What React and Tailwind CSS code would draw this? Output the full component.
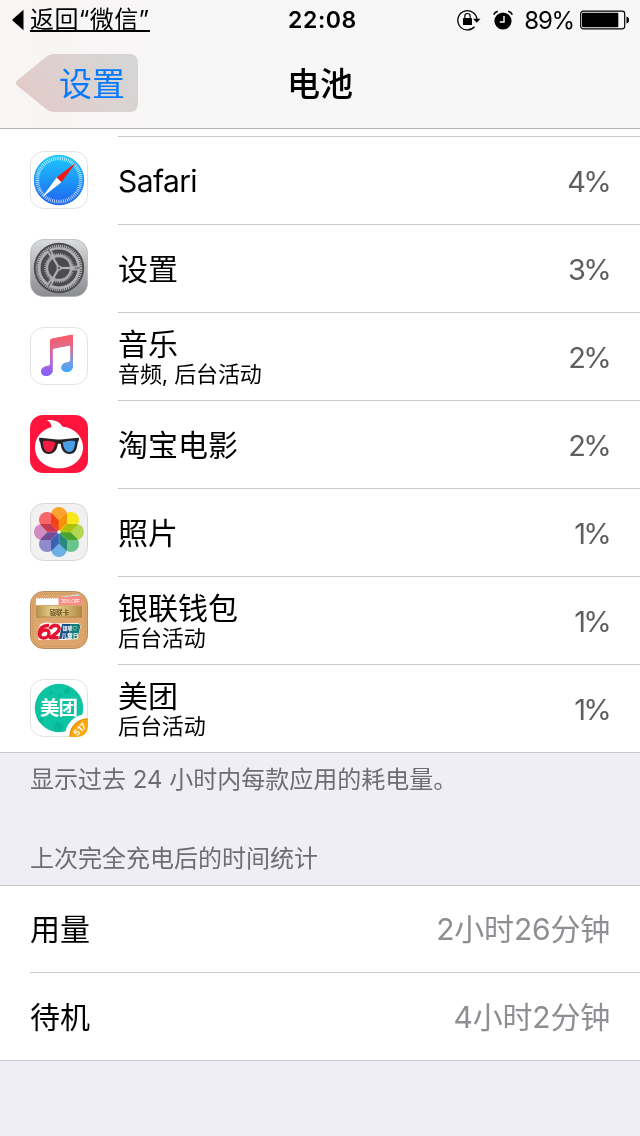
import React from 'react';

// =========================================================================
// 1. APP ICONS
// =========================================================================

const ANGLES_8 = [0, 45, 90, 135, 180, 225, 270, 315];

const SafariIcon = () => (
  <svg viewBox="0 0 58 58" className="block size-[58px]">
    <defs>
      <linearGradient id="safari" x1="0" y1="0" x2="0" y2="1">
        <stop offset="0" stopColor="#1bcbfc" />
        <stop offset="1" stopColor="#1f62ef" />
      </linearGradient>
    </defs>
    <rect x=".5" y=".5" width="57" height="57" rx="13" fill="#fff" stroke="#e2e2e4" />
    <circle cx="29" cy="29" r="25.2" fill="url(#safari)" />
    <circle cx="29" cy="29" r="21.6" fill="none" stroke="#fff" strokeOpacity=".8" strokeWidth="3.6" strokeDasharray=".8 1.1" />
    <path d="M46 11.5 31.4 31.2 26.6 26.6Z" fill="#fb1414" />
    <path d="M12 46.5 26.6 26.6 31.4 31.2Z" fill="#fff" />
  </svg>
);

const SettingsIcon = () => (
  <svg viewBox="0 0 58 58" className="block size-[58px]">
    <defs>
      <linearGradient id="settings" x1="0" y1="0" x2="0" y2="1">
        <stop offset="0" stopColor="#dadbdc" />
        <stop offset="1" stopColor="#8b8c91" />
      </linearGradient>
    </defs>
    <rect x=".5" y=".5" width="57" height="57" rx="13" fill="url(#settings)" stroke="#a9aaad" strokeOpacity=".6" />
    <circle cx="29" cy="29" r="25.2" fill="#4b4b4d" />
    <circle cx="29" cy="29" r="22" fill="none" stroke="#b4b5b8" strokeWidth="2.6" strokeDasharray="1.1 .9" />
    <circle cx="29" cy="29" r="19.8" fill="none" stroke="#b0b1b4" strokeWidth="2.6" />
    <circle cx="29" cy="29" r="14" fill="none" stroke="#a4a5a8" strokeWidth="1.8" strokeDasharray="1 .9" />
    <circle cx="29" cy="29" r="12.1" fill="none" stroke="#a8a9ac" strokeWidth="2.6" />
    {[0, 120, 240].map((angle) => (
      <g key={angle} transform={`rotate(${angle} 29 29)`}>
        <path d="M41 26.6H48V31.4H41Z" fill="#a8a9ac" />
        <path d="M29 29H48" stroke="#b0b1b4" strokeWidth="2.2" />
        <path d="M44.5 29H50" stroke="#4b4b4d" strokeWidth=".9" />
      </g>
    ))}
    <circle cx="29" cy="29" r="2.6" fill="#a8a9ac" />
    <circle cx="29" cy="29" r="1.1" fill="#4b4b4d" />
  </svg>
);

const MusicIcon = () => (
  <svg viewBox="0 0 58 58" className="block size-[58px]">
    <defs>
      <linearGradient id="noteLeft" gradientUnits="userSpaceOnUse" x1="0" y1="8" x2="0" y2="49">
        <stop offset="0" stopColor="#ff5a66" />
        <stop offset=".3" stopColor="#f0607d" />
        <stop offset=".65" stopColor="#b765d4" />
        <stop offset="1" stopColor="#8061ff" />
      </linearGradient>
      <linearGradient id="noteRight" gradientUnits="userSpaceOnUse" x1="0" y1="8" x2="0" y2="45">
        <stop offset="0" stopColor="#ff5a66" />
        <stop offset=".35" stopColor="#dd6c90" />
        <stop offset=".75" stopColor="#739bdd" />
        <stop offset="1" stopColor="#39a9ff" />
      </linearGradient>
    </defs>
    <rect x=".5" y=".5" width="57" height="57" rx="13" fill="#fff" stroke="#e2e2e4" />
    <path d="M20 13.2Q20 12 21.5 11.7L43 7.8V17.8L22.8 21.8V43C22.8 47 19.5 49 16 49 12.7 49 11 47 11 44.4 11 41.5 13.5 39.7 16.8 39.1 19.2 38.7 20 38.3 20 36.5Z" fill="url(#noteLeft)" />
    <path d="M21.5 11.7 41.5 7.8Q43 7.5 43 9V39C43 43 40 45 36.7 45 33.2 45 31.2 43 31.2 40.5 31.2 37.5 34 35.8 37 35.3 39.3 34.9 40.2 34.4 40.2 32.5V18.2L22.8 21.7V16Z" fill="url(#noteRight)" />
  </svg>
);

const MovieIcon = () => (
  <svg viewBox="0 0 58 58" className="block size-[58px]">
    <rect width="58" height="58" rx="13" fill="#ff143c" />
    <path d="M17 5.2C24 4.4 30 6.6 32.2 11.6 44.5 13 53 21.5 53 32.4 53 44.5 42.5 53.2 29 53.2S5 44.5 5 32.4C5 22 12 14.5 21.4 12.2 21.4 9 20 6.6 17 5.2Z" fill="#fff" />
    <path d="M9 23.5Q9 22.6 10 22.7L27 24.4H31L48 22.7Q49.3 22.6 49 24L48.4 26.5Q47.8 27 47.6 28.2C46.9 34.5 45.2 39 39.5 39 34 39 31.3 35 30.7 28.8H27.8C27.2 35 24 39 18.8 39 13.2 39 11.2 34.5 10.4 28.2Q10.2 27 9.5 26.5Z" fill="#252225" />
    <path d="M12.8 26.2C17 25.3 21 25.8 25.2 27.2 24.8 32.2 22.8 37 18.8 37 14.7 37 13 32.5 12.8 26.2Z" fill="#f51b43" />
    <path d="M45.2 26.2C41 25.3 37 25.8 32.8 27.2 33.2 32.2 35.2 37 39.2 37 43.3 37 45 32.5 45.2 26.2Z" fill="#489fe5" />
  </svg>
);

const PETAL_COLORS = ['#fba22f', '#f7e71c', '#b3d653', '#67c48b', '#6bb1e5', '#8d8cc8', '#d08cc0', '#f7676a'];

const PhotosIcon = () => (
  <svg viewBox="0 0 58 58" className="block size-[58px]">
    <rect x=".5" y=".5" width="57" height="57" rx="13" fill="#f1f1f2" stroke="#d7d7d9" />
    <g className="isolate">
      {ANGLES_8.map((angle, i) => (
        <path
          key={angle}
          d="M21 12A8 8 0 0 1 37 12V20.7L29 28.6 21 20.7Z"
          fill={PETAL_COLORS[i]}
          transform={`rotate(${angle} 29 29)`}
          className="mix-blend-multiply"
        />
      ))}
    </g>
    <circle cx="29" cy="29" r="1.7" fill="#fff" />
  </svg>
);

const WalletIcon = () => (
  <svg viewBox="0 0 58 58" className="block size-[58px]">
    <defs>
      <linearGradient id="gold" x1="0" y1="0" x2="1" y2="0">
        <stop offset="0" stopColor="#b4914b" />
        <stop offset=".35" stopColor="#e6d18e" />
        <stop offset=".7" stopColor="#d0b26b" />
        <stop offset="1" stopColor="#ad8845" />
      </linearGradient>
    </defs>
    <rect x=".5" y=".5" width="57" height="57" rx="13" fill="#dda66d" stroke="#b98a59" />
    <rect x="2.8" y="2.8" width="52.4" height="52.4" rx="11" fill="none" stroke="#c08e5b" strokeWidth=".8" strokeDasharray="1.5 1.2" />
    <path d="M6 7H29V14H6Z" fill="#fff" />
    <path d="M7 7.5H29" stroke="#e5bd91" strokeWidth="1.2" strokeDasharray="1 1" />
    <path d="M36 5 48 3 52 7V13H30V6Z" fill="#c5e3e8" />
    <path d="M28.5 5.5Q34 6.7 39 5.5T52 5V14H28.5Z" fill="#f58c86" />
    <text x="31" y="12.3" fontSize="5" fill="#fff" fontFamily="Inter, sans-serif" textLength="19">30% OFF</text>
    <rect x="6" y="15" width="46" height="11.5" fill="url(#gold)" />
    <path d="M6 26H52" stroke="#b58745" />
    <text x="19.5" y="23.6" fontSize="6.6" fontWeight="700" fill="#6a5125" fontFamily="'Noto Sans CJK SC', sans-serif">银联卡</text>
    <path d="M10 33.5Q15 30 23 32.5L48 32Q52 34 50 38L47 48 33 49 9 49Q6 43 10 33.5Z" fill="#fff" />
    <path d="M32 33H41L37.5 48H29Z" fill="#174f82" />
    <path d="M41 33H48.5Q51 33.5 50 37L47 48H37.5Z" fill="#147c79" />
    {/* the two digits share one interlocked stroke */}
    <path d="M19 34.5C12.5 34 9.3 38 9.3 42.2 9.3 45.5 11.2 47 13.8 47 17 47 19 44.8 19 42.2 19 39.8 17.2 38.8 15 39 12.5 39.2 10.5 41 9.8 43.5M20 38.3C21 35.5 23.3 34.3 25.8 34.5 29 34.8 30 37 28.5 39.7 27 42.3 23.5 44.2 20.2 46.8H28.7" fill="none" stroke="#e5132e" strokeWidth="3.4" strokeLinejoin="round" />
    <text x="32.5" y="39.3" fontSize="5" fontWeight="700" fill="#fff" fontFamily="'Noto Sans CJK SC', sans-serif" textLength="15">银联♡</text>
    <text x="31.2" y="46.6" fontSize="5.8" fontWeight="700" fill="#fff" fontFamily="'Noto Sans CJK SC', sans-serif">儿童日</text>
  </svg>
);

const MeituanIcon = () => (
  <svg viewBox="0 0 58 58" className="block size-[58px]">
    <defs>
      <clipPath id="meituan">
        <rect x="1" y="1" width="56" height="56" rx="12.5" />
      </clipPath>
    </defs>
    <rect x=".5" y=".5" width="57" height="57" rx="13" fill="#fff" stroke="#e2e2e4" />
    <circle cx="29" cy="29" r="24.2" fill="#0cc3a2" />
    <g fill="#09b798">
      <circle cx="37" cy="12" r="3" />
      <circle cx="30" cy="17" r="1.6" />
      <circle cx="21" cy="14" r="1.8" />
      <circle cx="28" cy="48" r="5" />
      <circle cx="11" cy="41" r="2.5" />
    </g>
    <text x="10" y="36" fontSize="19.5" fontWeight="700" fill="#fff" fontFamily="'Noto Sans CJK SC', sans-serif" textLength="38">美团</text>
    <circle cx="57" cy="57" r="22" fill="#fff" clipPath="url(#meituan)" />
    <path d="M58 39.5V46Q58 58 46 58H40A18 18 0 0 1 58 39.5Z" fill="#fda80a" />
    <path d="M40 57.5A17.5 17.5 0 0 1 57.5 40" fill="none" stroke="#e18705" strokeWidth="1.2" />
    <text x="50" y="53.5" fontSize="8.6" fontWeight="700" fill="#fff" textAnchor="middle" fontFamily="Inter, sans-serif" transform="rotate(-45 50 50.5)">517</text>
  </svg>
);

// =========================================================================
// 2. DATA
// =========================================================================

const apps = [
  { name: 'Safari', percent: '4%', Icon: SafariIcon },
  { name: '设置', percent: '3%', Icon: SettingsIcon },
  { name: '音乐', detail: '音频, 后台活动', percent: '2%', Icon: MusicIcon },
  { name: '淘宝电影', percent: '2%', Icon: MovieIcon },
  { name: '照片', percent: '1%', Icon: PhotosIcon },
  { name: '银联钱包', detail: '后台活动', percent: '1%', Icon: WalletIcon },
  { name: '美团', detail: '后台活动', percent: '1%', Icon: MeituanIcon },
];

const usage = [
  { label: '用量', value: '2小时26分钟' },
  { label: '待机', value: '4小时2分钟' },
];

// =========================================================================
// 3. REUSABLE UI COMPONENTS
// =========================================================================

const StatusBar = () => (
  <div className="flex h-10 items-center justify-between pl-3 pr-2.5 pt-px">
    <div className="flex w-[210px] items-center">
      <svg viewBox="0 0 12 22" className="mb-0.5 h-[22px] w-3">
        <path d="M11.5.8V21.2L.7 11.7Q0 11 .7 10.3Z" />
      </svg>
      <span className="mb-px ml-1.5 h-[23px] w-[120px] whitespace-nowrap border-b-2 border-black text-2xl leading-[21px] tracking-[0.4px]">返回“微信”</span>
    </div>
    <span className="ml-[3px] text-[23px] font-semibold tracking-[0.6px]">22:08</span>
    <div className="flex w-[210px] items-center justify-end">
      <svg viewBox="0 0 24 22" className="mb-px h-[22px] w-6">
        <path d="M17.5 17.8A9.6 9.6 0 1 1 20 11" fill="none" stroke="#000" strokeWidth="1.3" />
        <path d="M16 9.7H23.5L19.8 13.7Z" />
        <rect x="6" y="9" width="9" height="7" rx=".6" />
        <path d="M7.8 9.5V7.2A2.7 2.7 0 0 1 13.2 7.2V9.5" fill="none" stroke="#000" strokeWidth="1.2" />
      </svg>
      <svg viewBox="0 0 20 20" className="mb-px ml-3 size-5">
        <circle cx="10" cy="11" r="8.6" />
        <path d="M11 6V12H6.8" fill="none" stroke="#fff" strokeWidth="1.4" />
        <path d="M.8 4.8Q1.5 2.2 4.8 1.3M15.2 1.3Q18.5 2.2 19.2 4.8" fill="none" stroke="#000" strokeWidth="1.5" />
      </svg>
      <span className="ml-[11.5px] text-2xl tracking-[-1.2px]">89%</span>
      <svg viewBox="0 0 50 20" className="mb-px ml-1.5 h-5 w-[50px]">
        <rect x=".7" y="1.2" width="44" height="17.6" rx="2.5" fill="none" stroke="#000" strokeWidth="1.2" />
        <rect x="2" y="2.7" width="36.3" height="14.6" rx="1" />
        <path d="M46.5 6.5Q49 7 49 10T46.5 13.5Z" />
      </svg>
    </div>
  </div>
);

const NavBar = () => (
  <div className="grid h-[88px] grid-cols-3 pt-3.5">
    <div className="grid h-[60px] items-center">
      <svg viewBox="0 0 138 60" className="col-start-1 row-start-1 h-[60px] w-[138px]">
        <defs>
          <linearGradient id="backShape" x1="0" y1=".7" x2="1" y2=".3">
            <stop offset="0" stopColor="#e2cac8" />
            <stop offset=".55" stopColor="#dcd2d1" />
            <stop offset="1" stopColor="#d5d5d5" />
          </linearGradient>
        </defs>
        <path d="M17.2 26.5 46 3Q49.5 0 53.5 0H129Q138 0 138 9V49Q138 58 129 58H53.5Q49.5 58 46 55L17.2 31.5Q14.5 29 17.2 26.5Z" fill="url(#backShape)" />
      </svg>
      <span className="col-start-1 row-start-1 pl-[59px] pt-0.5 text-[33px] text-[#067aff]">设置</span>
    </div>
    <h1 className="flex h-[60px] items-center justify-center pt-0.5 text-[33px] font-medium">电池</h1>
  </div>
);

const AppRow = ({ app, last }) => {
  const { name, detail, percent, Icon } = app;
  return (
    <div className={`flex h-[88px] items-stretch pl-[30px] ${last ? 'border-b border-[#c8c7cc]' : ''}`}>
      <div className="w-[88px] shrink-0 pt-3.5">
        <Icon />
      </div>
      <div className={`flex flex-1 items-center justify-between pr-[30px] ${last ? '' : 'border-b border-[#c8c7cc]'}`}>
        <div>
          <p className={`text-[30px] ${detail ? 'leading-[34px]' : 'pt-px leading-9'} ${name === 'Safari' ? 'tracking-[-0.6px]' : ''}`}>{name}</p>
          {detail && <p className="text-[22px] leading-[26px] tracking-[-0.1px]">{detail}</p>}
        </div>
        <span className="mr-[0.8px] pt-0.5 text-[29px] tracking-[-2.6px] text-[#5f5f62]">{percent}</span>
      </div>
    </div>
  );
};

const UsageRow = ({ item, last }) => (
  <div className={`pl-[30px] ${last ? 'h-[88px] border-b border-[#c8c7cc]' : 'h-[87px]'}`}>
    <div className={`flex h-full items-center justify-between pr-[30px] pt-px text-[30px] ${last ? '' : 'border-b border-[#c8c7cc]'}`}>
      <span>{item.label}</span>
      <span className="tracking-[-0.2px] text-[#8e8e93]">{item.value}</span>
    </div>
  </div>
);

// =========================================================================
// 4. MAIN BATTERY PAGE
// =========================================================================

export default function App() {
  return (
    <div className="h-[1136px] w-[640px] overflow-hidden bg-[#efeef5] font-['Inter','Noto_Sans_CJK_SC',sans-serif] text-black">
      <header className="h-[129px] border-b border-[#b2b2b2] bg-linear-to-r from-[#f8f5f4] to-[#f7f7f7] to-40%">
        <StatusBar />
        <NavBar />
      </header>

      <main>
        <section className="bg-white">
          <div className="ml-[118px] h-2 border-b border-[#c8c7cc]"></div>
          {apps.map((app, i) => (
            <AppRow key={app.name} app={app} last={i === apps.length - 1} />
          ))}
        </section>

        <div className="flex h-[133px] flex-col justify-between border-b border-[#c8c7cc] px-[30px] pb-2.5 pt-[11px] text-2xl text-[#6d6d72]">
          <p>显示过去 24 小时内每款应用的耗电量。</p>
          <h2>上次完全充电后的时间统计</h2>
        </div>

        <section className="bg-white">
          {usage.map((item, i) => (
            <UsageRow key={item.label} item={item} last={i === usage.length - 1} />
          ))}
        </section>
      </main>
    </div>
  );
}
